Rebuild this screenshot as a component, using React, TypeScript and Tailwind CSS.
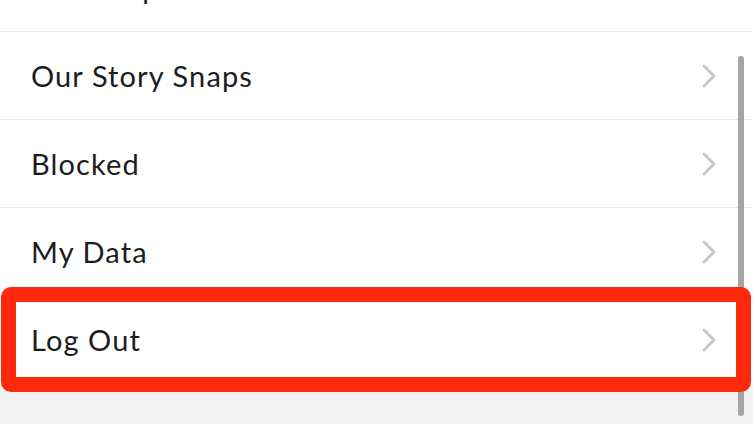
import React from "react";

const rows = ["Clear Top Locations", "Our Story Snaps", "Blocked", "My Data", "Log Out"];

function Chevron() {
	return (
		<svg width="16" height="26" viewBox="0 0 16 26" className="shrink-0">
			<path
				d="M3 3 L13 13 L3 23"
				fill="none"
				stroke="#c8c8c8"
				strokeWidth="3"
				strokeLinecap="round"
				strokeLinejoin="round"
			/>
		</svg>
	);
}

export default function App() {
	return (
		<div
			className="relative w-[753px] h-[424px] overflow-hidden bg-[#f2f2f2]"
			style={{ fontFamily: "Lato, 'Noto Sans', sans-serif" }}
		>
			<div className="flex flex-col bg-white -mt-[56px]">
				{rows.map((label, i) => {
					const isLogout = label === "Log Out";
					return (
						<div
							key={label}
							className={`relative h-[88px] flex items-center justify-between pl-[31px] pr-[36px] ${
								i < rows.length - 1 ? "border-b border-[#e8e8e8]" : ""
							}`}
						>
							<span className="text-[29px] text-[#1c1c1c] tracking-[1.1px]">
								{label}
							</span>
							<Chevron />
							{isLogout && (
								<div className="absolute left-[1px] right-[2px] -top-[9px] -bottom-[8px] border-[15px] border-[#ff2a0c] rounded-[10px] z-10" />
							)}
						</div>
					);
				})}
			</div>

			{/* scrollbar */}
			<div className="absolute left-[738px] top-[56px] w-[6px] h-[360px] rounded-full bg-[#a5a5a5]" />
		</div>
	);
}
